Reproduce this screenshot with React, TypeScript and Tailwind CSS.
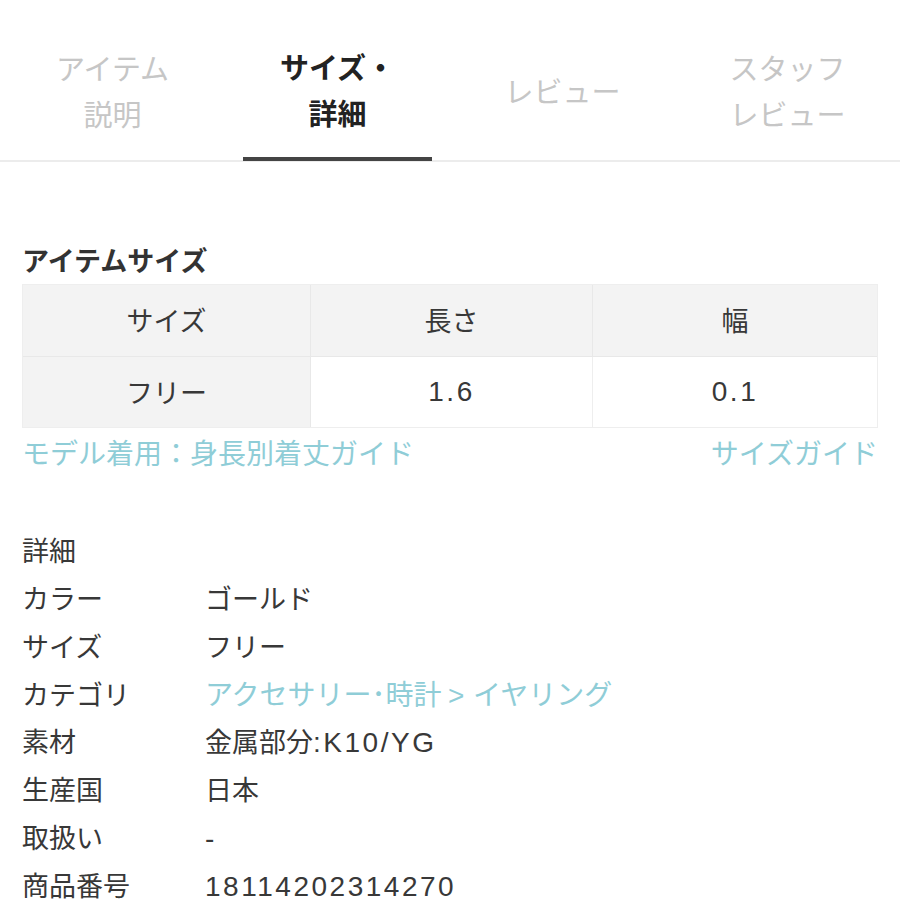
import React from 'react';

const tabs = [
  { id: 'desc', lines: ['アイテム', '説明'] },
  { id: 'size', lines: ['サイズ・', '詳細'] },
  { id: 'review', lines: ['レビュー'] },
  { id: 'staff', lines: ['スタッフ', 'レビュー'] },
];

const details = [
  { label: 'カラー', value: 'ゴールド' },
  { label: 'サイズ', value: 'フリー' },
  { label: 'カテゴリ', value: 'アクセサリー･時計 > イヤリング', link: true },
  { label: '素材', value: '金属部分:K10/YG' },
  { label: '生産国', value: '日本' },
  { label: '取扱い', value: '-' },
  { label: '商品番号', value: '18114202314270' },
];

// latin runs get a wider face so digits match the reference
const Txt: React.FC<{ text: string }> = ({ text }) => (
  <>
    {text.split(/([\x21-\x7e]+)/).map((part, i) =>
      /^[\x21-\x7e]+$/.test(part) ? (
        <span key={i} className="font-['Liberation_Sans',sans-serif] text-[28px] leading-none tracking-[0.09em]">
          {part}
        </span>
      ) : (
        <span key={i}>{part}</span>
      )
    )}
  </>
);

const App: React.FC = () => {
  const active = 'size';

  return (
    <div className="w-[900px] h-[900px] overflow-hidden bg-white text-[#383838] font-['Noto_Sans_CJK_JP','Noto_Sans',sans-serif]">
      {/* Tabs */}
      <nav className="grid grid-cols-4 h-[162px] border-b-2 border-[#ececec] pt-[20px]">
        {tabs.map((tab) => (
          <div
            key={tab.id}
            className={`flex flex-col items-center justify-center text-[29px] leading-[46px] ${
              tab.id === active ? 'text-[#222] font-bold' : 'text-[#c6c6c6]'
            }`}
          >
            <div
              className={`flex flex-col items-center h-full justify-center ${
                tab.id === active ? 'border-b-[4px] border-[#444] px-[37px] -mb-[2px]' : ''
              }`}
            >
              {tab.lines.map((l) => (
                <span key={l}>{l}</span>
              ))}
            </div>
          </div>
        ))}
      </nav>

      <div className="px-[22px]">
        {/* Item size */}
        <h3 className="mt-[78px] text-[27px] leading-[40px] font-bold text-[#333]">アイテムサイズ</h3>
        <div className="mt-[4px] grid grid-cols-[288px_282px_1fr] border border-[#eeeeee] text-[27px] text-[#383838]">
          <div className="h-[72px] flex items-center justify-center bg-[#f3f3f3] border-r border-[#e8e8e8] border-b">サイズ</div>
          <div className="h-[72px] flex items-center justify-center bg-[#f3f3f3] border-r border-[#e8e8e8] border-b">長さ</div>
          <div className="h-[72px] flex items-center justify-center bg-[#f3f3f3] border-b border-[#e8e8e8]">幅</div>
          <div className="h-[70px] flex items-center justify-center bg-[#f3f3f3] border-r border-[#e8e8e8]">フリー</div>
          <div className="h-[70px] flex items-center justify-center bg-white border-r border-[#eeeeee]">
            <Txt text="1.6" />
          </div>
          <div className="h-[70px] flex items-center justify-center bg-white">
            <Txt text="0.1" />
          </div>
        </div>
        <div className="flex justify-between mt-[4px] text-[28px] leading-[40px] text-[#8fcdd7]">
          <span>モデル着用：身長別着丈ガイド</span>
          <span>サイズガイド</span>
        </div>

        {/* Details */}
        <h3 className="mt-[54px] text-[27px] leading-[48px]">詳細</h3>
        <dl className="text-[27px] leading-[47.8px]">
          {details.map((d) => (
            <div key={d.label} className="flex h-[47.8px]">
              <dt className="w-[183px] shrink-0">{d.label}</dt>
              <dd className={d.link ? 'text-[#8fcdd7] text-[28px]' : ''}>
                <Txt text={d.value} />
              </dd>
            </div>
          ))}
        </dl>
      </div>
    </div>
  );
};

export default App;
